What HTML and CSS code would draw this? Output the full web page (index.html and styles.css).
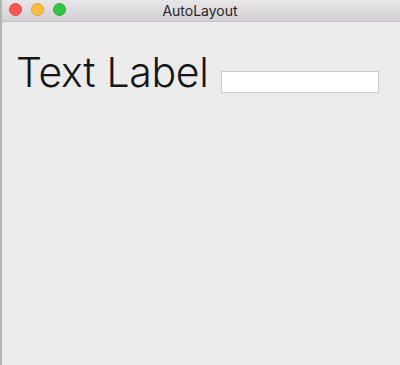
FILE: index.html
```html
<!DOCTYPE html>
<html lang="en">
<head>
  <meta charset="UTF-8" />
  <title>AutoLayout</title>
  <link rel="stylesheet" href="styles.css">
</head>
<body>
<div class="window">
  <div class="titlebar">
    <div class="lights">
      <span class="light red"></span>
      <span class="light yellow"></span>
      <span class="light green"></span>
    </div>
    <div class="title">AutoLayout</div>
  </div>
  <div class="content">
    <div class="label">Text Label</div>
    <input class="field" type="text">
  </div>
</div>
</body>
</html>
```

FILE: styles.css
```css
html, body {
  margin: 0;
  height: 100%;
  background: #ececec;
}

.window {
  height: 365px;
  display: flex;
  flex-direction: column;
  border-left: 2px solid #b4b4b4;
  box-sizing: border-box;
  font-family: "Inter", "Liberation Sans", sans-serif;
}

.titlebar {
  position: relative;
  height: 21px;
  background: linear-gradient(#e8e6e8, #d3d1d3);
  border-bottom: 1px solid #c4c4c4;
  display: flex;
  align-items: center;
  justify-content: center;
}

.lights {
  position: absolute;
  left: 7px;
  top: 3px;
  display: flex;
  gap: 9px;
}

.light {
  width: 13px;
  height: 13px;
  border-radius: 50%;
  box-sizing: border-box;
}

.red { background: #fc5753; border: 1px solid #df4744; }
.yellow { background: #fdbc40; border: 1px solid #de9f34; }
.green { background: #33c748; border: 1px solid #27aa35; }

.title {
  font-size: 14px;
  color: #262626;
  margin-left: -2px;
}

.content {
  flex: 1;
  display: flex;
  align-items: flex-start;
  padding: 26px 0 0 14px;
}

.label {
  font-size: 41px;
  font-weight: 300;
  color: #161616;
  line-height: 48px;
  letter-spacing: -0.3px;
}

.field {
  margin: 23px 0 0 12px;
  width: 158px;
  height: 22px;
  box-sizing: border-box;
  border: 1px solid #cbcbcb;
  background: #fff;
  padding: 0;
  outline: none;
}
```
